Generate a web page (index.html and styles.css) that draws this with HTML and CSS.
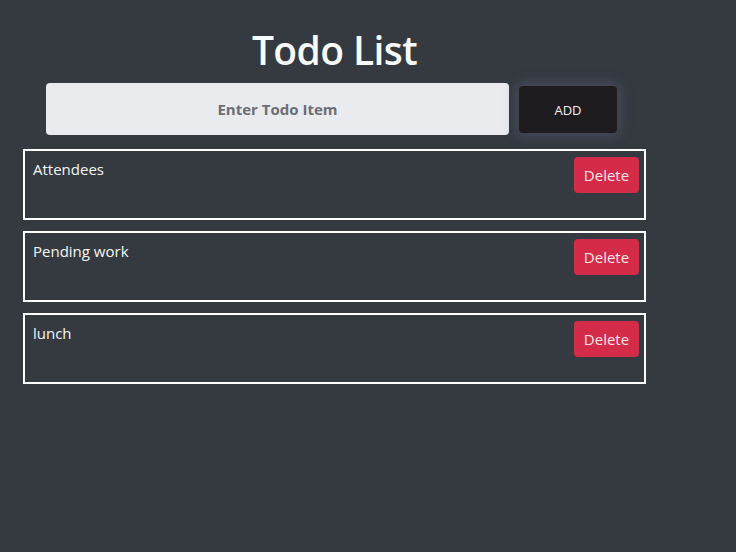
FILE: index.html
```html
<!DOCTYPE html>
<html>
<head>
<meta charset="utf-8">
<link rel="stylesheet" href="styles.css">
</head>
<body>
<div class="app">
  <h1 class="title">Todo List</h1>
  <div class="add-row">
    <input class="todo-input" type="text" placeholder="Enter Todo Item">
    <button class="add-btn">ADD</button>
  </div>
  <ul class="list">
    <li class="item"><span class="item-text">Attendees</span><button class="del-btn">Delete</button></li>
    <li class="item"><span class="item-text">Pending work</span><button class="del-btn">Delete</button></li>
    <li class="item"><span class="item-text">lunch</span><button class="del-btn">Delete</button></li>
  </ul>
</div>
</body>
</html>
```
FILE: styles.css
```css
html, body {
  margin: 0;
  padding: 0;
  background: #343a40;
  height: 100%;
}
body {
  font-family: "Open Sans", "Noto Sans", sans-serif;
  color: #fff;
}
.app {
  width: 623px;
  margin-left: 23px;
  padding-top: 24px;
}
.title {
  margin: 0;
  text-align: center;
  font-size: 39px;
  font-weight: 600;
  letter-spacing: -0.6px;
  line-height: 52px;
  color: #f8fbfb;
}
.add-row {
  display: flex;
  align-items: center;
  gap: 10px;
  margin-top: 7px;
  padding-left: 23px;
}
.todo-input {
  width: 463px;
  height: 52px;
  box-sizing: border-box;
  border: none;
  border-radius: 4px;
  background: #e9ebef;
  font-family: inherit;
  font-size: 15px;
  font-weight: 700;
  text-align: center;
  color: #333;
  outline: none;
}
.todo-input::placeholder {
  color: #6b6e73;
  opacity: 1;
}
.add-btn {
  width: 98px;
  height: 47px;
  margin-top: 1px;
  border: none;
  border-radius: 4px;
  background: #1f1c20;
  color: #f2f2f2;
  font-family: inherit;
  font-size: 13px;
  box-shadow: 0 0 12px 3px rgba(90, 90, 120, 0.55);
}
.list {
  list-style: none;
  margin: 14px 0 0 0;
  padding: 0;
  display: flex;
  flex-direction: column;
  gap: 11px;
}
.item {
  box-sizing: border-box;
  height: 71px;
  border: 2px solid #fff;
  display: flex;
  justify-content: space-between;
  align-items: flex-start;
  padding: 6px 5px 0 8px;
}
.item-text {
  font-size: 15px;
  line-height: 22px;
  padding-top: 1px;
  color: #f4f6f6;
}
.del-btn {
  width: 65px;
  height: 36px;
  border: none;
  border-radius: 4px;
  background: #d42b48;
  color: #fde6ea;
  font-family: inherit;
  font-size: 15px;
}
```
